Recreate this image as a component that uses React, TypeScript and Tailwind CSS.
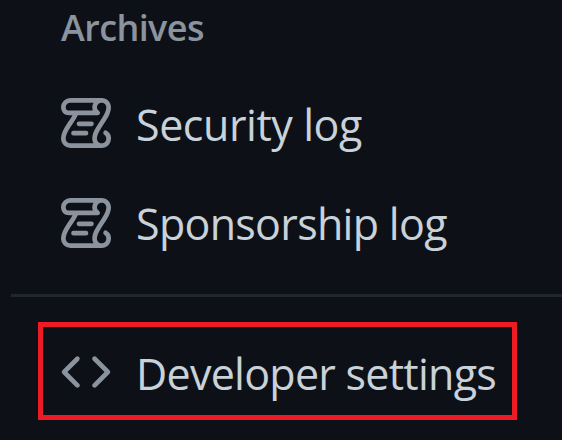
const LOG_LINES =
  'M5 8.25a.75.75 0 0 1 .75-.75h4a.75.75 0 0 1 0 1.5h-4A.75.75 0 0 1 5 8.25ZM4 10.5A.75.75 0 0 0 4 12h4a.75.75 0 0 0 0-1.5H4Z';
const LOG_SCROLL =
  'M13-.005c1.654 0 3 1.328 3 3 0 .982-.338 1.933-.783 2.818-.443.879-1.028 1.758-1.582 2.588l-.011.017c-.568.853-1.104 1.659-1.501 2.446-.398.789-.623 1.494-.623 2.136a1.5 1.5 0 1 0 2.333-1.248.75.75 0 0 1 .834-1.246A3 3 0 0 1 13 16H3a3 3 0 0 1-3-3c0-1.582.891-3.135 1.777-4.506.209-.322.418-.637.623-.946.473-.709.923-1.386 1.287-2.048H2.51c-.576 0-1.381-.133-1.907-.783A2.68 2.68 0 0 1 0 2.995a3 3 0 0 1 3-3Zm0 1.5a1.5 1.5 0 0 0-1.5 1.5c0 .476.223.834.667 1.132A.75.75 0 0 1 11.75 5.5H5.368c-.467 1.003-1.141 2.015-1.773 2.963-.192.289-.381.571-.558.845C2.13 10.711 1.5 11.916 1.5 13A1.5 1.5 0 0 0 3 14.5h7.401A2.989 2.989 0 0 1 10 13c0-.979.338-1.928.784-2.812.441-.874 1.023-1.748 1.575-2.576l.017-.026c.568-.853 1.103-1.658 1.501-2.448.398-.79.623-1.497.623-2.143 0-.838-.669-1.5-1.5-1.5Zm-10 0a1.5 1.5 0 0 0-1.5 1.5c0 .321.1.569.27.778.097.12.325.227.74.227h7.674A2.737 2.737 0 0 1 10 2.995c0-.546.146-1.059.401-1.5Z';
const CODE =
  'm11.28 3.22 4.25 4.25a.75.75 0 0 1 0 1.06l-4.25 4.25a.749.749 0 0 1-1.275-.326.749.749 0 0 1 .215-.734L13.94 8l-3.72-3.72a.749.749 0 0 1 .326-1.275.749.749 0 0 1 .734.215Zm-6.56 0a.751.751 0 0 1 1.042.018.751.751 0 0 1 .018 1.042L2.06 8l3.72 3.72a.749.749 0 0 1-.326 1.275.749.749 0 0 1-.734-.215L.47 8.53a.75.75 0 0 1 0-1.06Z';

function Icon({ paths }: { paths: string[] }) {
  return (
    <svg
      viewBox="0 0 16 16"
      className="size-[50px] shrink-0 overflow-visible fill-[#8b949e]"
      aria-hidden="true"
    >
      {paths.map((d) => (
        <path key={d} d={d} />
      ))}
    </svg>
  );
}

export default function App() {
  return (
    <nav className="h-[440px] w-[562px] overflow-hidden bg-[#0d1117] font-['Open_Sans','Noto_Sans',sans-serif] text-[43px] leading-[60px] whitespace-nowrap text-[#c9d1d9]">
      <h2 className="h-[73px] pt-1 pl-[61px] text-[36px] leading-[48px] font-semibold tracking-[-0.6px] text-[#8b949e]">
        Archives
      </h2>
      <ul>
        <li className="flex h-[100px] items-center gap-[25px] pl-[61px]">
          <Icon paths={[LOG_LINES, LOG_SCROLL]} />
          <span className="pt-[3px] tracking-[-0.44px]">Security log</span>
        </li>
        <li className="flex h-[99px] items-center gap-[25px] pl-[61px]">
          <Icon paths={[LOG_LINES, LOG_SCROLL]} />
          <span className="pt-[2px] tracking-[-0.7px]">Sponsorship log</span>
        </li>
      </ul>
      <hr className="mt-[22px] ml-[11px] border-t-[3px] border-[#21262d]" />
      <a className="mt-[25px] ml-[38px] flex h-[98px] w-[479px] items-center gap-[25px] border-5 border-[#ed1c24] pt-[2px] pl-[18px]">
        <Icon paths={[CODE]} />
        <span className="pt-[3px] tracking-[-0.73px]">Developer settings</span>
      </a>
    </nav>
  );
}
